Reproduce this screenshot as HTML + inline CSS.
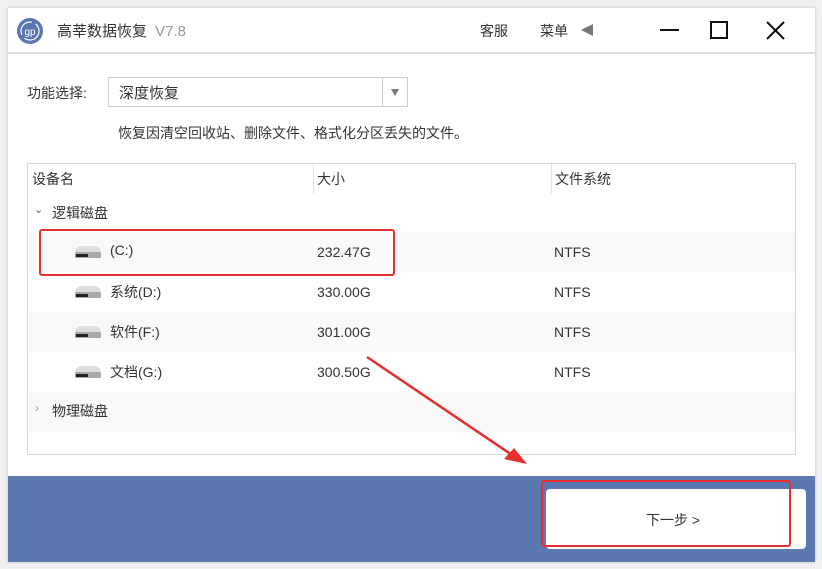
<!DOCTYPE html>
<html><head><meta charset="utf-8"><style>
*{margin:0;padding:0;box-sizing:border-box}
body{width:822px;height:569px;background:#f0f0f0;position:relative;overflow:hidden;font-family:"Liberation Sans","Noto Sans CJK SC",sans-serif;color:#333;font-size:14px}
.win{position:absolute;left:8px;top:8px;width:807px;height:554px;background:#fff;box-shadow:0 0 3px rgba(0,0,0,.2)}
.abs{position:absolute;white-space:nowrap}
.row{position:absolute;left:1px;width:766px;height:40px}
.alt{background:#f9f9f9}
.drive{position:absolute;left:44px;top:13px}
.n{top:12px!important}
</style></head><body>
<div class="win">
 <div class="abs" style="left:0;top:44px;width:807px;height:2px;background:#dcdcdc"></div>
 <svg class="abs" style="left:9px;top:10px" width="26" height="26" viewBox="0 0 26 26"><circle cx="13" cy="13" r="13" fill="#5a77b3"/><circle cx="13" cy="13" r="9" fill="none" stroke="#fff" stroke-width="1.2" stroke-dasharray="20 4"/><text x="13" y="17" font-size="10" fill="#fff" text-anchor="middle" font-family="Liberation Sans">gp</text></svg>
 <div class="abs" style="left:49px;top:12px;font-size:15px;color:#333">高莘数据恢复 <span style="color:#999;margin-left:4px">V7.8</span></div>
 <div class="abs" style="left:472px;top:13px">客服</div>
 <div class="abs" style="left:532px;top:13px">菜单</div>
 <svg class="abs" style="left:572px;top:15px" width="14" height="14"><path d="M1 7L13 1V13Z" fill="#777"/></svg>
 <div class="abs" style="left:652px;top:21px;width:19px;height:2px;background:#111"></div>
 <div class="abs" style="left:702px;top:13px;width:18px;height:18px;border:2px solid #111"></div>
 <svg class="abs" style="left:758px;top:13px" width="19" height="19"><path d="M1 1L18 18M18 1L1 18" stroke="#111" stroke-width="2"/></svg>

 <div class="abs" style="left:19px;top:75px">功能选择:</div>
 <div class="abs" style="left:100px;top:69px;width:300px;height:30px;border:1px solid #ccc"></div>
 <div class="abs" style="left:374px;top:70px;width:1px;height:28px;background:#ccc"></div>
 <div class="abs" style="left:111px;top:74px;font-size:15px">深度恢复</div>
 <svg class="abs" style="left:382px;top:80px" width="10" height="9"><path d="M1 1H9L5 8Z" fill="#777"/></svg>
 <div class="abs" style="left:110px;top:115px">恢复因清空回收站、删除文件、格式化分区丢失的文件。</div>

 <div class="abs" style="left:19px;top:155px;width:769px;height:292px;border:1px solid #d8d8d8;background:#fff">
  <div class="abs" style="left:285px;top:0;width:1px;height:30px;background:#e4e4e4"></div>
  <div class="abs" style="left:523px;top:0;width:1px;height:30px;background:#e4e4e4"></div>
  <div class="abs" style="left:4px;top:5px">设备名</div>
  <div class="abs" style="left:289px;top:5px">大小</div>
  <div class="abs" style="left:527px;top:5px">文件系统</div>
  <div class="row" style="top:30px"><span class="abs" style="left:5px;top:9px;font-size:11px;color:#555">⌄</span><span class="abs" style="left:23px;top:9px">逻辑磁盘</span></div>
  <div class="row alt" style="top:68px"><svg class="drive" width="30" height="14"><path d="M3 4Q5 1 10 1H20Q25 1 27 4L28 8H2Z" fill="#ddd"/><rect x="2" y="7" width="26" height="6" rx="1" fill="#a9a9a9"/><rect x="3" y="9" width="12" height="3" fill="#222"/></svg><span class="abs" style="left:81px;top:10px">(C:)</span><span class="abs n" style="left:288px">232.47G</span><span class="abs n" style="left:525px">NTFS</span></div>
  <div class="row" style="top:108px"><svg class="drive" width="30" height="14"><path d="M3 4Q5 1 10 1H20Q25 1 27 4L28 8H2Z" fill="#ddd"/><rect x="2" y="7" width="26" height="6" rx="1" fill="#a9a9a9"/><rect x="3" y="9" width="12" height="3" fill="#222"/></svg><span class="abs" style="left:81px;top:10px">系统(D:)</span><span class="abs n" style="left:288px">330.00G</span><span class="abs n" style="left:525px">NTFS</span></div>
  <div class="row alt" style="top:148px"><svg class="drive" width="30" height="14"><path d="M3 4Q5 1 10 1H20Q25 1 27 4L28 8H2Z" fill="#ddd"/><rect x="2" y="7" width="26" height="6" rx="1" fill="#a9a9a9"/><rect x="3" y="9" width="12" height="3" fill="#222"/></svg><span class="abs" style="left:81px;top:10px">软件(F:)</span><span class="abs n" style="left:288px">301.00G</span><span class="abs n" style="left:525px">NTFS</span></div>
  <div class="row" style="top:188px"><svg class="drive" width="30" height="14"><path d="M3 4Q5 1 10 1H20Q25 1 27 4L28 8H2Z" fill="#ddd"/><rect x="2" y="7" width="26" height="6" rx="1" fill="#a9a9a9"/><rect x="3" y="9" width="12" height="3" fill="#222"/></svg><span class="abs" style="left:81px;top:10px">文档(G:)</span><span class="abs n" style="left:288px">300.50G</span><span class="abs n" style="left:525px">NTFS</span></div>
  <div class="row alt" style="top:228px"><span class="abs" style="left:6px;top:9px;color:#999;font-size:12px">›</span><span class="abs" style="left:23px;top:9px">物理磁盘</span></div>
 </div>

 <div class="abs" style="left:0;top:468px;width:807px;height:86px;background:#5b78b1"></div>
 <div class="abs" style="left:538px;top:481px;width:260px;height:60px;background:#fff;border-radius:4px"></div>
 <div class="abs" style="left:638px;top:502px;font-size:14px;color:#333">下一步 &gt;</div>
</div>
<div class="abs" style="left:39px;top:229px;width:356px;height:47px;border:2.5px solid #e53030;border-radius:3px"></div>
<div class="abs" style="left:541px;top:480px;width:250px;height:67px;border:2.5px solid #e53030;border-radius:3px"></div>
<svg class="abs" style="left:0;top:0" width="822" height="569"><path d="M367 357L515 457" stroke="#e53030" stroke-width="2.5"/><path d="M527 464L504 459L514 448Z" fill="#e53030"/></svg>
</body></html>
